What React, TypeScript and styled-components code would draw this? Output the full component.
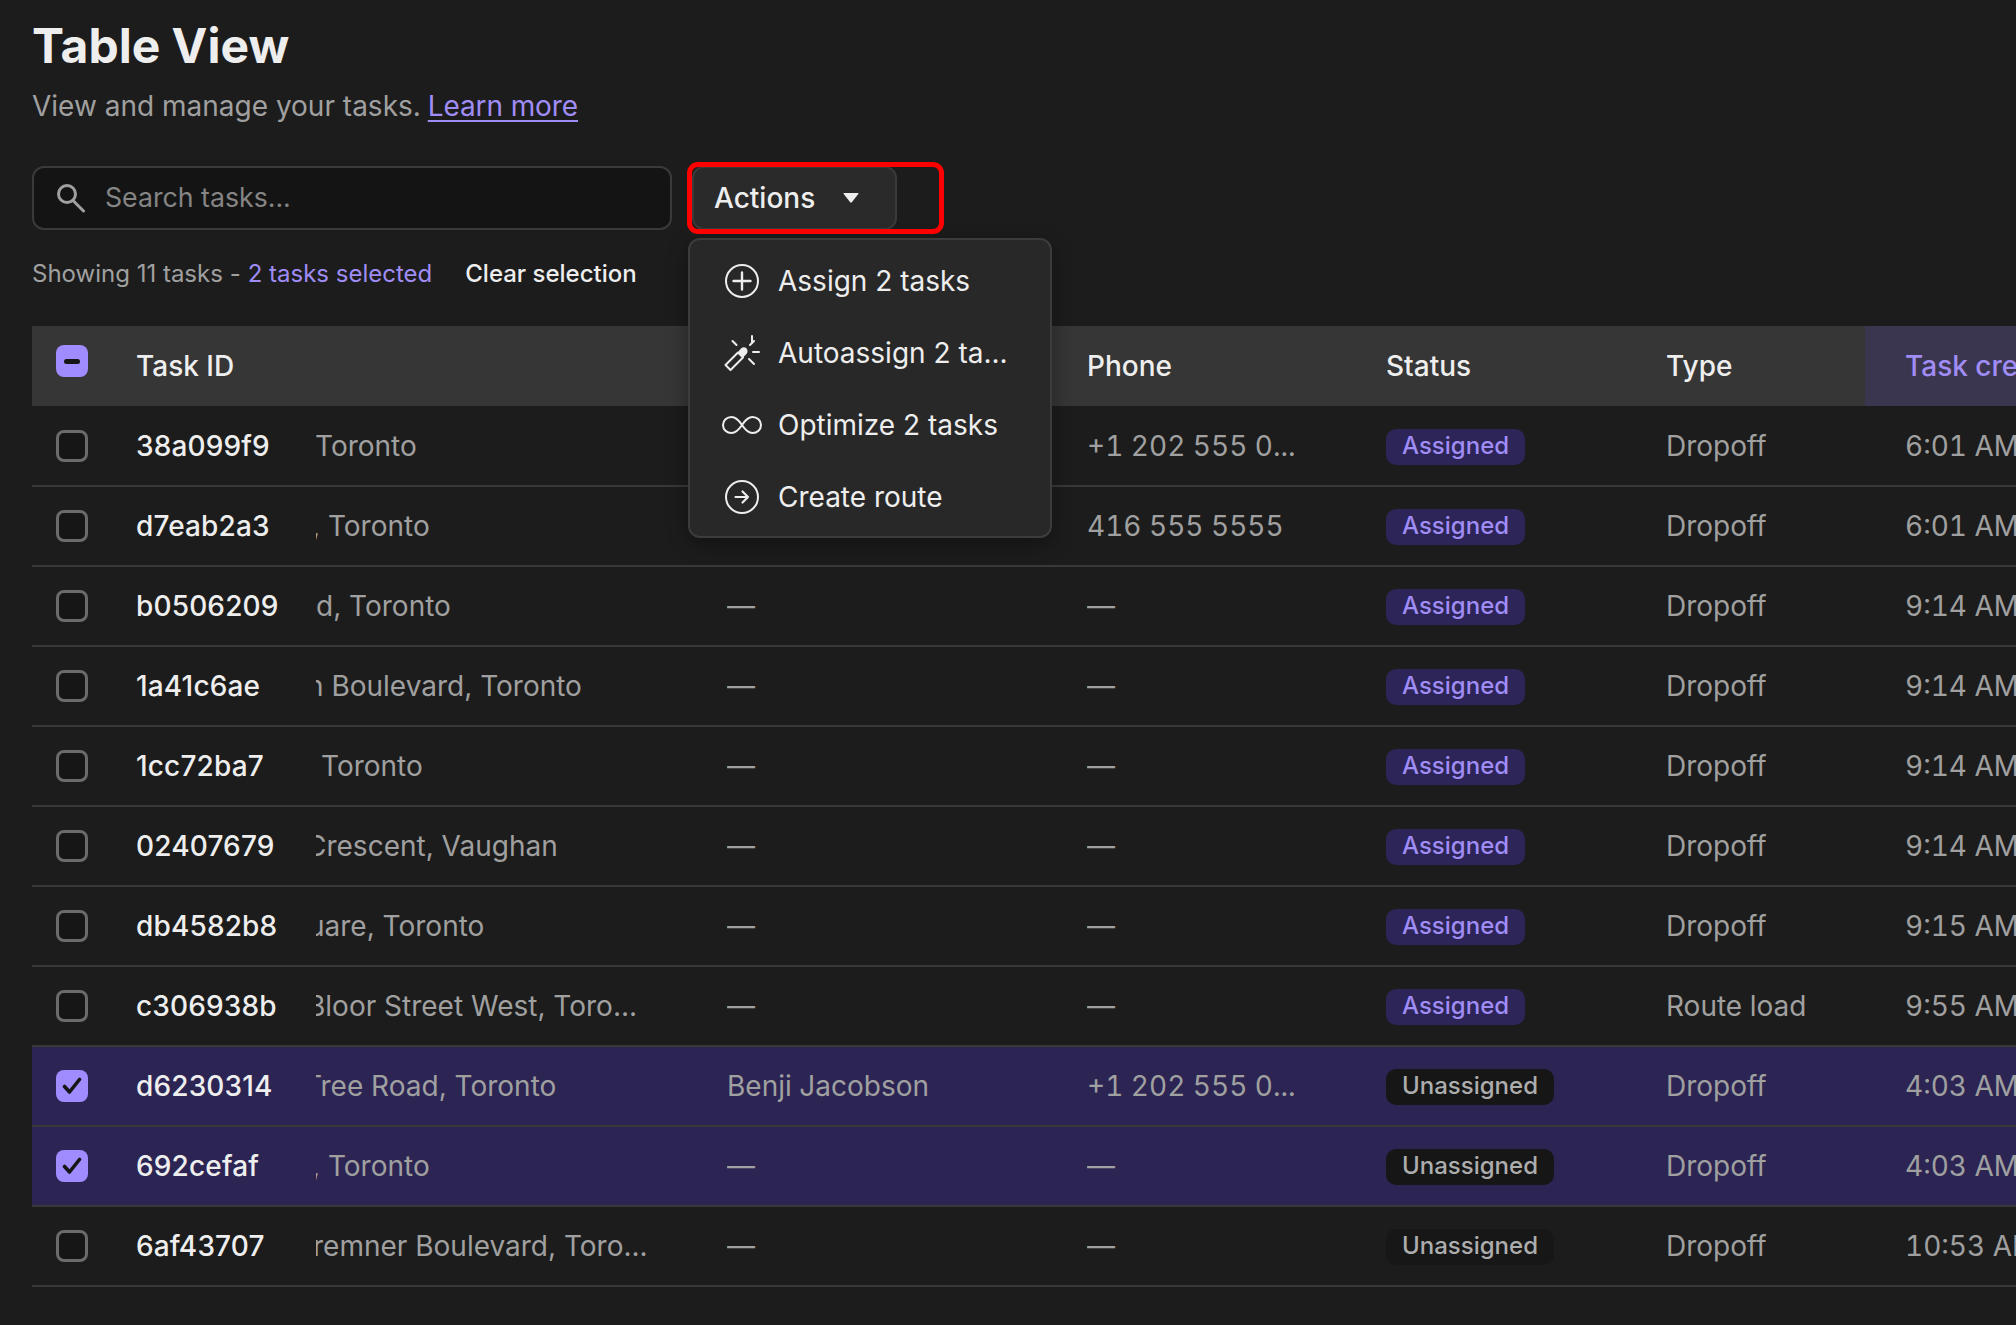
import React from "react";
import styled, { createGlobalStyle, css } from "styled-components";

const Global = createGlobalStyle`
  html, body { margin: 0; padding: 0; background: #1c1c1c; }
  body { width: 2016px; height: 1325px; overflow: hidden; font-family: Inter, "Liberation Sans", sans-serif; color: #eeeeee; }
  * { box-sizing: border-box; }
`;

const Page = styled.main`
  width: 2016px;
  height: 1325px;
  padding: 18px 0 0 32px;
  overflow: hidden;
  background: #1c1c1c;
`;
const Title = styled.h1`
  margin: 0;
  font-size: 48px;
  line-height: 56px;
  font-weight: 700;
  color: #eeeeee;
`;
const Subtitle = styled.p`
  margin: 14px 0 0;
  font-size: 28px;
  line-height: 36px;
  color: #a0a0a0;
`;
const LearnMore = styled.a`
  color: #a08cf5;
  text-decoration: underline;
  text-underline-offset: 4px;
  text-decoration-thickness: 2px;
  margin-left: -1px;
  letter-spacing: -0.1px;
`;
const Toolbar = styled.div`
  position: relative;
  display: flex;
  gap: 20px;
  margin-top: 42px;
`;
const SearchBox = styled.div`
  width: 640px;
  height: 64px;
  display: flex;
  align-items: center;
  gap: 19px;
  padding-left: 22px;
  background: #141414;
  border: 2px solid #3a3a3a;
  border-radius: 12px;
`;
const Placeholder = styled.span`
  font-size: 26.7px;
  line-height: 32px;
  padding-bottom: 2px;
  color: #858585;
`;
const ActionsButton = styled.button`
  width: 205px;
  height: 64px;
  display: flex;
  align-items: center;
  gap: 28px;
  padding: 0 0 0 20px;
  background: #2a2a2a;
  border: 2px solid #3a3a3a;
  border-radius: 12px;
  color: #eeeeee;
  font: 500 28px Inter, sans-serif;
`;
const Highlight = styled.div`
  position: absolute;
  left: 655px;
  top: -4px;
  width: 257px;
  height: 72px;
  border: 5px solid #ff0000;
  border-radius: 11px;
  z-index: 3;
  pointer-events: none;
`;
const Menu = styled.div`
  position: absolute;
  left: 656px;
  top: 72px;
  width: 364px;
  height: 300px;
  padding: 5px 0;
  background: #282828;
  border: 2px solid #3c3c3c;
  border-radius: 12px;
  box-shadow: 0 6px 20px rgba(0, 0, 0, 0.35);
  z-index: 2;
`;
const MenuItem = styled.div`
  height: 72px;
  display: flex;
  align-items: center;
  padding-left: 34px;
  font-size: 28px;
  color: #eeeeee;
  white-space: nowrap;
`;
const MenuIcon = styled.span`
  width: 54px;
  display: flex;
  align-items: center;
  justify-content: flex-start;
  flex: none;
`;
const StatusLine = styled.div`
  display: flex;
  margin-top: 28px;
  font-size: 24px;
  line-height: 32px;
  color: #a0a0a0;
`;
const Selected = styled.span`
  color: #a08cf5;
  margin-left: 7px;
`;
const Clear = styled.span`
  margin-left: 33px;
  color: #eeeeee;
  font-weight: 500;
`;
const Table = styled.div`
  margin-top: 36px;
  width: 1984px;
`;
const Columns = css`
  display: grid;
  grid-template-columns: 104px 180px 411px 360px 299px 280px 199px 151px;
`;
const HeadRow = styled.div`
  ${Columns}
  height: 80px;
  background: #363636;
  align-items: stretch;
`;
const Body = styled.div`
  padding-top: 1px;
`;
const HeadCell = styled.div<{ $active?: boolean }>`
  display: flex;
  align-items: center;
  font-size: 28px;
  font-weight: 500;
  white-space: nowrap;
  color: ${(p) => (p.$active ? "#a08cf5" : "#eeeeee")};
  background: ${(p) => (p.$active ? "#3b3650" : "transparent")};
  padding-left: ${(p) => (p.$active ? "40px" : "0")};
  overflow: hidden;
`;
const Row = styled.div<{ $selected?: boolean }>`
  ${Columns}
  height: 80px;
  background: ${(p) => (p.$selected ? "#2c2554" : "#1c1c1c")};
  border-bottom: 2px solid #383838;
  align-items: center;
  font-size: 28px;
  color: #a0a0a0;
`;
const CheckCell = styled.div<{ $head?: boolean }>`
  padding-left: 24px;
  display: flex;
  align-items: center;
  height: 100%;
  padding-bottom: ${(p) => (p.$head ? "10px" : "0")};
`;
const Box = styled.span<{ $on?: boolean }>`
  width: 32px;
  height: 32px;
  border-radius: 8px;
  display: flex;
  align-items: center;
  justify-content: center;
  background: ${(p) => (p.$on ? "#a18cff" : "#161616")};
  border: ${(p) => (p.$on ? "none" : "3px solid #6b6b6b")};
`;
const IdCell = styled.div`
  color: #eeeeee;
  font-weight: 500;
  letter-spacing: 0.15px;
`;
const AddressCell = styled.div`
  overflow: hidden;
  white-space: nowrap;
`;
const AddressText = styled.span<{ $shift: number }>`
  display: inline-block;
  margin-left: ${(p) => p.$shift}px;
`;
const PlainCell = styled.div`
  white-space: nowrap;
  overflow: hidden;
  font-variant-numeric: tabular-nums;
`;
const TimeCell = styled.div`
  white-space: nowrap;
  padding-left: 40px;
  overflow: hidden;
  font-variant-numeric: tabular-nums;
`;
const Badge = styled.span<{ $assigned: boolean; $selected?: boolean }>`
  display: inline-flex;
  align-items: center;
  height: 36px;
  padding: 0 16px 2px;
  border-radius: 10px;
  font-size: 24px;
  font-weight: 500;
  color: ${(p) => (p.$assigned ? "#a08cf5" : "#adadad")};
  background: ${(p) => (p.$assigned ? "#2d2557" : p.$selected ? "#161616" : "#171717")};
`;

const SearchIcon = () => (
  <svg width="30" height="30" viewBox="0 0 30 30" fill="none" stroke="#a0a0a0" strokeWidth="3">
    <circle cx="11" cy="11" r="8.5" />
    <path d="M17 17.5 L27.5 28" strokeLinecap="round" />
  </svg>
);
const Caret = () => (
  <svg width="16" height="10" viewBox="0 0 16 10" fill="#eeeeee">
    <path d="M1 0 H15 Q16 0 15.3 1 L8.8 9.3 Q8 10 7.2 9.3 L0.7 1 Q0 0 1 0 Z" />
  </svg>
);
const PlusCircle = () => (
  <svg width="36" height="36" viewBox="0 0 36 36" fill="none" stroke="#eeeeee" strokeWidth="2">
    <circle cx="18" cy="18" r="16" />
    <path d="M18 9.5 V26.5 M9.5 18 H26.5" strokeWidth="2.4" strokeLinecap="round" />
  </svg>
);
const Wand = () => (
  <svg width="36" height="36" viewBox="0 0 36 36" fill="none" stroke="#eeeeee" strokeWidth="2" strokeLinecap="round">
    <path d="M28 1 V7 M8.5 6 L12.5 10 M30 6 L26 10 M29 17 H35 M25 24 L30 29" />
    <path d="M1.5 30 L14 17.5 L19 22.5 L6.5 35 Z" strokeLinejoin="round" />
    <path d="M14 17 L17 13.5 C19.5 11 23.5 12.5 23.5 16 C23.5 17.5 23 18.5 22 19.5 L19 22.5 Z" fill="#eeeeee" stroke="none" />
  </svg>
);
const InfinityLoop = styled.svg`
  margin-left: -2px;
`;
const Infinity2 = () => (
  <InfinityLoop width="40" height="20" viewBox="0 0 40 20" fill="none" stroke="#eeeeee" strokeWidth="2">
    <path d="M20 10 C16 4 13 2 9.5 2 C4.8 2 1 5.5 1 10 C1 14.5 4.8 18 9.5 18 C13 18 16 16 20 10 C24 4 27 2 30.5 2 C35.2 2 39 5.5 39 10 C39 14.5 35.2 18 30.5 18 C27 18 24 16 20 10 Z" />
  </InfinityLoop>
);
const ArrowCircle = () => (
  <svg width="36" height="36" viewBox="0 0 36 36" fill="none" stroke="#eeeeee" strokeWidth="2">
    <circle cx="18" cy="18" r="16" />
    <path d="M11.5 18 H24 M18.5 12.5 L24 18 L18.5 23.5" strokeWidth="2.2" strokeLinecap="round" strokeLinejoin="round" />
  </svg>
);
const CheckMark = () => (
  <svg width="20" height="18" viewBox="0 0 20 18" fill="none" stroke="#161616" strokeWidth="3.6" strokeLinecap="round" strokeLinejoin="round">
    <path d="M2.5 9.5 L7.5 15 L17.5 2.5" />
  </svg>
);
const Dash = () => (
  <svg width="16" height="5" viewBox="0 0 16 5">
    <rect width="16" height="5" rx="2.5" fill="#161616" />
  </svg>
);

type Task = {
  id: string;
  address: string;
  shift: number;
  name?: string;
  phone?: string;
  status: "Assigned" | "Unassigned";
  type: string;
  time: string;
  selected?: boolean;
  covered?: boolean;
};

const tasks: Task[] = [
  { id: "38a099f9", address: "Toronto", shift: -1, phone: "+1 202 555 0...", status: "Assigned", type: "Dropoff", time: "6:01 AM", covered: true },
  { id: "d7eab2a3", address: ", Toronto", shift: -4, phone: "416 555 5555", status: "Assigned", type: "Dropoff", time: "6:01 AM", covered: true },
  { id: "b0506209", address: "d, Toronto", shift: 0, status: "Assigned", type: "Dropoff", time: "9:14 AM" },
  { id: "1a41c6ae", address: "n Boulevard, Toronto", shift: -9, status: "Assigned", type: "Dropoff", time: "9:14 AM" },
  { id: "1cc72ba7", address: "Toronto", shift: 5, status: "Assigned", type: "Dropoff", time: "9:14 AM" },
  { id: "02407679", address: "Crescent, Vaughan", shift: -10, status: "Assigned", type: "Dropoff", time: "9:14 AM" },
  { id: "db4582b8", address: "uare, Toronto", shift: -8, status: "Assigned", type: "Dropoff", time: "9:15 AM" },
  { id: "c306938b", address: "Bloor Street West, Toro...", shift: -9, status: "Assigned", type: "Route load", time: "9:55 AM" },
  { id: "d6230314", address: "Tree Road, Toronto", shift: -12, name: "Benji Jacobson", phone: "+1 202 555 0...", status: "Unassigned", type: "Dropoff", time: "4:03 AM", selected: true },
  { id: "692cefaf", address: ", Toronto", shift: -4, status: "Unassigned", type: "Dropoff", time: "4:03 AM", selected: true },
  { id: "6af43707", address: "remner Boulevard, Toro...", shift: -3, status: "Unassigned", type: "Dropoff", time: "10:53 AM" },
];

const menuItems: { label: string; icon: React.ReactNode }[] = [
  { label: "Assign 2 tasks", icon: <PlusCircle /> },
  { label: "Autoassign 2 ta...", icon: <Wand /> },
  { label: "Optimize 2 tasks", icon: <Infinity2 /> },
  { label: "Create route", icon: <ArrowCircle /> },
];

export default function App() {
  return (
    <Page>
      <Global />
      <Title>Table View</Title>
      <Subtitle>
        View and manage your tasks. <LearnMore href="#">Learn more</LearnMore>
      </Subtitle>
      <Toolbar>
        <SearchBox>
          <SearchIcon />
          <Placeholder>Search tasks...</Placeholder>
        </SearchBox>
        <ActionsButton>
          Actions
          <Caret />
        </ActionsButton>
        <Highlight />
        <Menu>
          {menuItems.map((m) => (
            <MenuItem key={m.label}>
              <MenuIcon>{m.icon}</MenuIcon>
              {m.label}
            </MenuItem>
          ))}
        </Menu>
      </Toolbar>
      <StatusLine>
        Showing 11 tasks -<Selected>2 tasks selected</Selected>
        <Clear>Clear selection</Clear>
      </StatusLine>
      <Table>
        <HeadRow>
          <CheckCell $head>
            <Box $on>
              <Dash />
            </Box>
          </CheckCell>
          <HeadCell>Task ID</HeadCell>
          <HeadCell />
          <HeadCell />
          <HeadCell>Phone</HeadCell>
          <HeadCell>Status</HeadCell>
          <HeadCell>Type</HeadCell>
          <HeadCell $active>Task created</HeadCell>
        </HeadRow>
        <Body>
          {tasks.map((t) => (
            <Row key={t.id} $selected={t.selected}>
              <CheckCell>
                <Box $on={t.selected}>{t.selected && <CheckMark />}</Box>
              </CheckCell>
              <IdCell>{t.id}</IdCell>
              <AddressCell>
                <AddressText $shift={t.shift}>{t.address}</AddressText>
              </AddressCell>
              <PlainCell>{t.covered ? null : t.name ?? "—"}</PlainCell>
              <PlainCell>{t.phone ?? "—"}</PlainCell>
              <PlainCell>
                <Badge $assigned={t.status === "Assigned"} $selected={t.selected}>
                  {t.status}
                </Badge>
              </PlainCell>
              <PlainCell>{t.type}</PlainCell>
              <TimeCell>{t.time}</TimeCell>
            </Row>
          ))}
        </Body>
      </Table>
    </Page>
  );
}
